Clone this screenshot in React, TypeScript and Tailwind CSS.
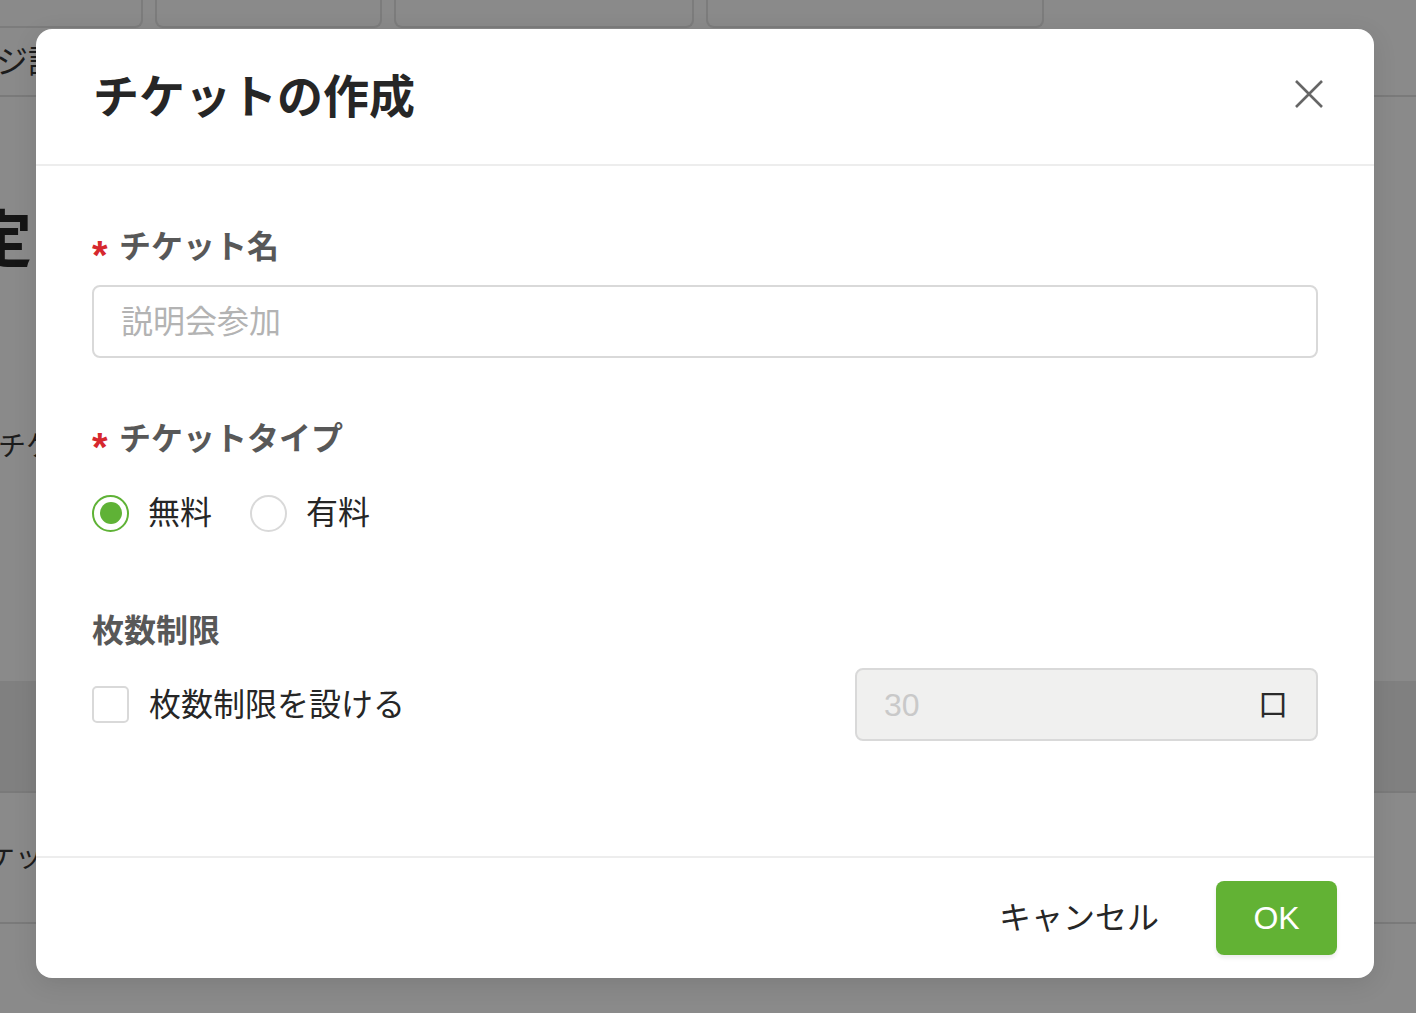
import React from "react";

const FONT = '"Liberation Sans", "Noto Sans CJK JP", sans-serif';

function Tab({ className }: { className: string }) {
  return <div className={`h-[28px] rounded-b-[8px] border-x-2 border-b-2 border-[#7c7c7c] ${className}`} />;
}

function Label({ text, required }: { text: string; required?: boolean }) {
  return (
    <div className="flex h-[44px] items-center">
      {required && (
        <span className="mr-[9px] mt-[16px] w-[18px] text-[40px] font-bold leading-[30px] text-[#d6282e]">*</span>
      )}
      <span className="text-[32px] font-bold leading-none text-[#585858]">{text}</span>
    </div>
  );
}

export default function App() {
  return (
    <div className="relative h-[1013px] w-[1416px] overflow-hidden bg-[#8a8a8a]" style={{ fontFamily: FONT }}>
      {/* background page (dimmed) */}
      <div className="flex h-full flex-col">
        <div className="flex h-[28px] gap-[12px]">
          <Tab className="ml-[-20px] w-[163px]" />
          <Tab className="w-[227px]" />
          <Tab className="w-[300px]" />
          <Tab className="w-[338px]" />
        </div>
        <div className="flex h-[69px] items-center border-b-2 border-[#7a7a7a]">
          <span className="ml-[-4px] text-[32px] text-[#1c1c1c]">ジ設定</span>
        </div>
        <div className="mt-[113px] ml-[-30px] text-[62px] font-bold leading-none text-[#151515]">定</div>
        <div className="mt-[161px] ml-[-2px] text-[28px] leading-none text-[#1c1c1c]">チケット</div>
        <div className="mt-[220px] h-[112px] border-b-2 border-[#7a7a7a] bg-[#808080]" />
        <div className="flex h-[131px] items-center border-b-2 border-[#7a7a7a]">
          <span className="ml-[-41px] text-[28px] text-[#1c1c1c]">チケット</span>
        </div>
      </div>

      {/* modal */}
      <div className="absolute left-[36px] top-[29px] flex h-[949px] w-[1338px] flex-col rounded-[16px] bg-white shadow-[0_6px_24px_rgba(0,0,0,0.1)]">
        <div className="flex h-[137px] shrink-0 items-center justify-between border-b-2 border-[#ededed] pl-[57px] pr-[50px]">
          <h1 className="text-[46px] font-bold leading-none text-[#262626]">チケットの作成</h1>
          <svg width="30" height="30" viewBox="0 0 30 30" className="mt-[-6px]">
            <path d="M2 2 L28 28 M28 2 L2 28" stroke="#666" strokeWidth="2.6" fill="none" />
          </svg>
        </div>

        <div className="flex flex-1 flex-col px-[56px] pt-[59px]">
          <Label text="チケット名" required />
          <div className="mt-[16px] flex h-[73px] items-center rounded-[8px] border-2 border-[#d9d9d9] px-[27px]">
            <span className="text-[32px] leading-none text-[#b3b3b3]">説明会参加</span>
          </div>

          <div className="mt-[59px]">
            <Label text="チケットタイプ" required />
          </div>
          <div className="mt-[30px] flex h-[44px] items-center">
            <div className="flex h-[37px] w-[37px] items-center justify-center rounded-full border-2 border-[#5fb236]">
              <div className="h-[22px] w-[22px] rounded-full bg-[#5fb236]" />
            </div>
            <span className="ml-[19px] text-[32px] leading-none text-[#262626]">無料</span>
            <div className="ml-[38px] h-[37px] w-[37px] rounded-full border-2 border-[#d9d9d9]" />
            <span className="ml-[19px] text-[32px] leading-none text-[#262626]">有料</span>
          </div>

          <div className="mt-[74px]">
            <Label text="枚数制限" />
          </div>
          <div className="mt-[15px] flex h-[73px] items-center justify-between">
            <div className="flex items-center">
              <div className="h-[37px] w-[37px] rounded-[5px] border-2 border-[#d9d9d9]" />
              <span className="ml-[20px] text-[32px] leading-none text-[#262626]">枚数制限を設ける</span>
            </div>
            <div className="flex h-[73px] w-[463px] items-center justify-between rounded-[8px] border-2 border-[#d9d9d9] bg-[#f0f0ef] pl-[27px] pr-[28px]">
              <span className="text-[32px] leading-none text-[#c9c9c9]">30</span>
              <span className="text-[30px] leading-none text-[#2a2a2a]">口</span>
            </div>
          </div>
        </div>

        <div className="flex h-[122px] shrink-0 items-center justify-end gap-[57px] border-t-2 border-[#ededed] pr-[37px]">
          <span className="text-[32px] leading-none text-[#262626]">キャンセル</span>
          <div className="flex h-[74px] w-[121px] items-center justify-center rounded-[8px] bg-[#62b234] shadow-[0_3px_4px_rgba(0,0,0,0.08)]">
            <span className="text-[32px] leading-none text-white">OK</span>
          </div>
        </div>
      </div>
    </div>
  );
}
